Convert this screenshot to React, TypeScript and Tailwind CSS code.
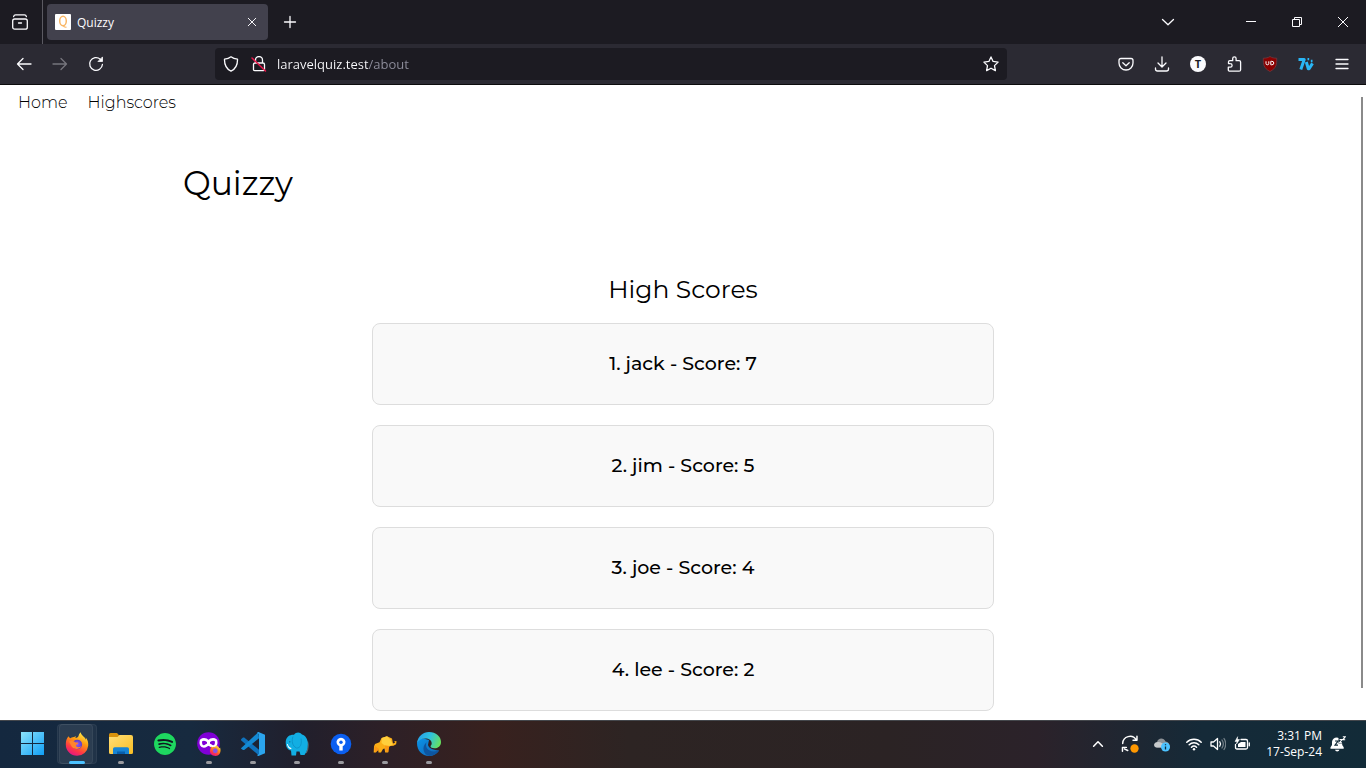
import type { ReactNode } from "react";
import { SiSpotify } from "react-icons/si";

const scores = [
  { name: "jack", score: 7 },
  { name: "jim", score: 5 },
  { name: "joe", score: 4 },
  { name: "lee", score: 2 },
];

function Line({ children, size = 16, className = "" }: { children: ReactNode; size?: number; className?: string }) {
  return (
    <svg width={size} height={size} viewBox="0 0 16 16" fill="none" stroke="currentColor" strokeWidth="1.3" strokeLinecap="round" strokeLinejoin="round" className={className} aria-hidden="true">
      {children}
    </svg>
  );
}

function ToolButton({ label, children, dim = false }: { label: string; children: ReactNode; dim?: boolean }) {
  return (
    <button type="button" aria-label={label} className={dim ? "flex size-9 items-center justify-center text-[#76757d]" : "flex size-9 items-center justify-center text-[#fbfbfe]"}>
      {children}
    </button>
  );
}

function TabStrip() {
  return (
    <div className="flex h-11 shrink-0 items-center bg-[#1c1b22] text-[#fbfbfe]">
      <button type="button" aria-label="Firefox View" className="flex h-full w-[43px] items-center justify-center border-r border-[#5b5a62] pr-0.5">
        <Line>
          <rect x="0.7" y="5" width="14.6" height="10.2" rx="2" />
          <path d="M1.6 2.6Q2 .8 3.6 .8h8.8q1.600 0 2 1.800M6.500 9h3" />
        </Line>
      </button>
      <div className="ml-1 flex h-9 w-[221px] items-center rounded bg-[#42414d] pl-2 pr-1">
        <svg width="16" height="16" viewBox="0 0 16 16" aria-hidden="true">
          <rect width="16" height="16" rx="1" fill="#fff" />
          <ellipse cx="8" cy="7" rx="3.300" ry="4.700" fill="none" stroke="#f9b766" strokeWidth="1.500" />
          <path d="M8 11.500q1 2 3.500 1.700" fill="none" stroke="#f9b766" strokeWidth="1.200" />
        </svg>
        <span className="ml-1.5 flex-1 pt-0.5 text-xs">Quizzy</span>
        <button type="button" aria-label="Close tab" className="flex size-6 items-center justify-center">
          <Line size={12}><path d="M3 3l10 10M13 3L3 13" /></Line>
        </button>
      </div>
      <button type="button" aria-label="New tab" className="ml-1 flex size-9 items-center justify-center">
        <Line><path d="M8 2.500v11M2.500 8h11" /></Line>
      </button>
      <button type="button" aria-label="List all tabs" className="ml-auto mr-[42px] flex size-9 items-center justify-center">
        <Line><path d="M2.500 5.500L8 10.800l5.500-5.300" /></Line>
      </button>
      <button type="button" aria-label="Minimize" className="flex h-full w-[46px] items-center justify-center">
        <svg width="10" height="10" fill="none" stroke="currentColor"><path d="M0 4.500h10" /></svg>
      </button>
      <button type="button" aria-label="Restore" className="flex h-full w-[46px] items-center justify-center">
        <svg width="10" height="10" fill="none" stroke="currentColor"><path d="M.5 2.500h7v7h-7zM2.500 2.500v-2h7v7h-2" /></svg>
      </button>
      <button type="button" aria-label="Close" className="flex h-full w-[46px] items-center justify-center">
        <svg width="10" height="10" fill="none" stroke="currentColor"><path d="M0 0l10 10M10 0L0 10" /></svg>
      </button>
    </div>
  );
}

function Toolbar() {
  return (
    <div className="flex h-[41px] shrink-0 items-center border-b border-[#0c0c0d] bg-[#2b2a33] px-1.5 text-[#fbfbfe]">
      <ToolButton label="Back"><Line><path d="M15 8H1.500M7 2.500L1.500 8 7 13.500" /></Line></ToolButton>
      <ToolButton label="Forward" dim><Line><path d="M1 8h13.500M9 2.500L14.500 8 9 13.500" /></Line></ToolButton>
      <ToolButton label="Reload">
        <Line>
          <path d="M12.300 3.200A6.400 6.400 0 1 0 14.400 8.500" />
          <path d="M14.500 1.300v4.200h-4.200z" fill="currentColor" strokeWidth=".8" />
        </Line>
      </ToolButton>
      <div className="mx-[101px] flex h-8 flex-1 items-center rounded bg-[#1c1b22] px-2">
        <Line>
          <path d="M8 .8C6 2.500 4 3 1.500 3.100 1.300 8.500 2.500 12.500 8 15.200c5.500-2.700 6.700-6.700 6.500-12.100C12 3 10 2.500 8 .8z" />
        </Line>
        <Line className="ml-3">
          <path d="M4.500 7V4a3.500 3.500 0 0 1 7 0v3M2.500 8.500q0-1.500 1.500-1.500h8q1.500 0 1.500 1.500v5q0 1.200-1.200 1.200H3.700q-1.200 0-1.200-1.200z" />
          <path d="M1 2l13.500 13" stroke="#e8174b" strokeWidth="1.500" />
        </Line>
        <input
          type="text"
          aria-label="Address"
          defaultValue="laravelquiz.test/about"
          className="ml-2.5 min-w-0 flex-1 bg-[linear-gradient(90deg,#fbfbfe_91px,#8f8f9d_91px)] bg-clip-text pt-0.5 text-[13px] text-transparent caret-white outline-none"
        />
        <button type="button" aria-label="Bookmark this page">
          <Line><path d="M8 .9l2.100 4.500 5 .7-3.600 3.500.9 5L8 12.200l-4.400 2.400.9-5L.9 6.100l5-.7z" /></Line>
        </button>
      </div>
      <ToolButton label="Save to Pocket">
        <Line><path d="M3 2.500h10q2 0 2 2V7a7 7 0 0 1-14 0V4.500q0-2 2-2zM4.800 6.800L8 9.800l3.200-3" /></Line>
      </ToolButton>
      <ToolButton label="Downloads"><Line><path d="M8 .8v10M4 7l4 4 4-4M1.500 12v1q0 2 2 2h9q2 0 2-2v-1" /></Line></ToolButton>
      <ToolButton label="Account">
        <span className="flex size-4 items-center justify-center rounded-full bg-[#fbfbfe] text-[11px] font-bold text-[#1c1b22]">T</span>
      </ToolButton>
      <ToolButton label="Extensions">
        <Line><path d="M2.500 7.500V6q0-1.300 1.300-1.300h2.900V2.500a1.700 1.700 0 0 1 3.400 0v2.200h3q1.500 0 1.500 1.300v7.700q0 1.500-1.500 1.500H4q-1.700 0-1.700-1.500v-2.500h2a1.800 1.800 0 0 0 0-3.600z" /></Line>
      </ToolButton>
      <ToolButton label="uBlock Origin">
        <svg width="16" height="16" viewBox="0 0 16 16" aria-hidden="true">
          <path d="M8 .5C6 1.800 4 2.200 1.300 2.200 1.200 8.500 1.500 12 8 15.500c6.500-3.500 6.800-7 6.700-13.300C12 2.200 10 1.800 8 .5z" fill="#8a0000" stroke="#6d3a40" strokeWidth=".8" />
          <path d="M4 5.300v2.200q0 1.300 1.400 1.300t1.400-1.300V5.300M8.800 5.300v3.500h1q2 0 2-1.750t-2-1.750z" fill="none" stroke="#fff" strokeWidth="1" />
        </svg>
      </ToolButton>
      <ToolButton label="7TV">
        <svg width="16" height="14" viewBox="0 0 16 14" fill="none" stroke="#29b6f6" strokeWidth="3" strokeLinejoin="round" aria-hidden="true">
          <path d="M.5 2.600h5.700L2.800 12.500M8.300 5l2 6.700h.8l3.400-5.300" />
          <path d="M9.500 2.200h1.700M12.800 4h1.700" strokeWidth="2.300" />
        </svg>
      </ToolButton>
      <ToolButton label="Open application menu"><Line><path d="M2 3.500h12M2 8h12M2 12.500h12" /></Line></ToolButton>
    </div>
  );
}

function Page() {
  return (
    <div className="relative min-h-0 flex-1 overflow-hidden bg-white font-['Montserrat',Inter,sans-serif] text-black">
      <nav className="flex gap-5 px-[18px] pt-1.5 text-base font-light">
        <a href="#home">Home</a>
        <a href="#highscores">Highscores</a>
      </nav>
      <main className="mx-auto max-w-[1000px]">
        <h1 className="pt-12 text-[33px] leading-10">Quizzy</h1>
        <section className="mx-auto max-w-[622px] pt-[68px] text-center">
          <h2 className="text-[25px] leading-9">High Scores</h2>
          <ol className="mt-4 flex flex-col gap-5">
            {scores.map((entry, index) => (
              <li key={entry.name} className="flex h-[82px] items-center justify-center rounded-lg border border-[#dddddd] bg-[#f9f9f9] text-[19px] font-medium">
                {index + 1}. {entry.name} - Score: {entry.score}
              </li>
            ))}
          </ol>
        </section>
      </main>
      <div className="absolute bottom-8 right-[3px] top-3 w-0.5 bg-[#8a8a8a]" />
    </div>
  );
}

function WindowsIcon() {
  return (
    <svg width="24" height="24" viewBox="0 0 24 24" aria-hidden="true">
      <defs>
        <linearGradient id="win" gradientUnits="userSpaceOnUse" x1="0" y1="0" x2="24" y2="24"><stop stopColor="#8ce4fc" /><stop offset="1" stopColor="#0a9bf5" /></linearGradient>
      </defs>
      <path d="M0 0h11v11H0zM12 0h11v11H12zM0 12h11v11H0zM12 12h11v11H12z" fill="url(#win)" />
    </svg>
  );
}

function FirefoxIcon() {
  return (
    <svg width="24" height="24" viewBox="0 0 24 24" aria-hidden="true" className="relative">
      <defs>
        <linearGradient id="fox" x1=".8" y1="0" x2=".3" y2="1"><stop stopColor="#fff44f" /><stop offset=".4" stopColor="#ff980e" /><stop offset=".75" stopColor="#ff3647" /><stop offset="1" stopColor="#e31587" /></linearGradient>
        <radialGradient id="globe"><stop stopColor="#9059ff" /><stop offset="1" stopColor="#5b3ec4" /></radialGradient>
      </defs>
      <path d="M3.500 4.300C4 5.500 4.800 6 5.500 6.300 7 5 8.500 5.500 9.800 4.800c.4-.3.700-.6 1.200-.7-.8 1-.5 1.500-.3 2 1.500-.3 2.600-1 3-2.500.3-1.500 1-2.600 2-3.400.2 3 4 4.200 5.200 7.500.2-.7.100-1.500-.2-2.200 2 2.400 2.800 5 2.500 8.200A11.200 11.200 0 0 1 12 23.800 11.300 11.300 0 0 1 .8 12.500C.8 9 1.600 6.300 3.500 4.300z" fill="url(#fox)" />
      <circle cx="12.300" cy="12.500" r="4.800" fill="url(#globe)" />
      <path d="M4 9.500c2.500-1.500 4.500-.5 5.800.5 1.300.8 3 .3 3.700.9-.5 1.500-2.700 1.300-2.500 2.800.6 1.800 3.700 1.800 5.500.6-2 3.500-9 3.700-10.500-1z" fill="#ff842d" />
    </svg>
  );
}

function FolderIcon() {
  return (
    <svg width="24" height="24" viewBox="0 0 24 24" aria-hidden="true">
      <defs><linearGradient id="fold" x1="0" y1="0" x2="1" y2="1"><stop stopColor="#ffdf79" /><stop offset="1" stopColor="#f9bd22" /></linearGradient></defs>
      <path d="M0 2.500Q0 1 1.500 1H8l2.300 2.500V8H0z" fill="#d8920c" />
      <path d="M0 5h8.500l2-2H22q2 0 2 2v15.500q0 1.500-1.500 1.500h-21Q0 22 0 20.500z" fill="url(#fold)" />
      <path d="M4 22v-5q0-1.700 1.700-1.700h12.600q1.700 0 1.700 1.700v5z" fill="#1684d4" />
      <path d="M8 19.500h8v2.500H8z" fill="#075eac" />
    </svg>
  );
}

function PrivateIcon() {
  return (
    <svg width="24" height="24" viewBox="0 0 24 24" aria-hidden="true">
      <circle cx="11.500" cy="11.500" r="11.300" fill="#8000d7" />
      <path d="M4 8.500c2-1.500 5-1.200 7.500 1 2.500-2.200 5.500-2.500 7.500-1 .8 3.500-.3 6-2.800 6-2.200 0-3-2-4.700-2s-2.500 2-4.700 2C4.300 14.500 3.200 12 4 8.500z" fill="none" stroke="#fff" strokeWidth="2.600" strokeLinejoin="round" />
      <path d="M11.500 8.500v5" stroke="#fff" strokeWidth="3" />
      <g transform="translate(12.500 12.500) scale(.48)">
        <path d="M3.500 4.300L6 6l4-2 1 2 4-5 6 7 1-2c3 9-1 17.500-9 17.800C4 24 .5 18 .8 12.500z" fill="url(#fox)" />
        <circle cx="12" cy="13" r="5" fill="#8655e5" />
      </g>
    </svg>
  );
}

function CodeIcon() {
  return (
    <svg width="24" height="24" viewBox="0 0 24 24" aria-hidden="true">
      <path d="M0 7.300L2 5.500h1.200L18 17.700v5.800L.2 8.500z" fill="#0f72bd" />
      <path d="M0 16.200L17.500 0 18 6.300 3.200 18H2L.2 16.700z" fill="#1389d3" />
      <path d="M17.500 0L24 2.800v18.400L17.500 24q-.8 0-1.500-1l2-1V2l-2-1q.7-1 1.500-1z" fill="#2ba5ee" />
    </svg>
  );
}

function ElephantIcon() {
  return (
    <svg width="24" height="24" viewBox="0 0 24 24" aria-hidden="true">
      <path d="M22.500 9.500q1.800 6-1.300 11.500" fill="none" stroke="#596066" strokeWidth="1.200" />
      <path d="M.8 9C1.500 4.500 5 2.500 9 2.800 11-.2 15-.3 17 2.500c4 1 6 5.500 5.800 10 0 4-1.300 7.500-3.300 10.500h-4l-1-3.500h-3L11 23.500H6.500L6 18.500C2.500 18.500.2 14 .8 9z" fill="#12aee3" />
      <path d="M8 4.500c-1.500 4-1 9.500 3.500 11.500 4 .5 5.500-4.500 4.500-9.500" fill="none" stroke="#0a8fc5" strokeWidth=".8" />
      <path d="M2.800 12q.7 3.500 3.600 4l-.2 1.300Q2.700 16.800 2 12z" fill="#fff" />
      <circle cx="4.800" cy="9.800" r=".6" fill="#0f4763" />
    </svg>
  );
}

function SourcetreeIcon() {
  return (
    <svg width="24" height="24" viewBox="0 0 24 24" aria-hidden="true">
      <circle cx="12" cy="12" r="10.300" fill="#0b5ff0" />
      <path d="M10.300 18.500v-4.200a4.500 4.500 0 1 1 3.400 0v4.200z" fill="#fff" />
      <circle cx="12" cy="10.200" r="1.700" fill="#0b5ff0" />
    </svg>
  );
}

function YellowElephantIcon() {
  return (
    <svg width="24" height="24" viewBox="0 0 24 24" aria-hidden="true">
      <path d="M2 12l4.500-1.800 2-4.200L14 4.200l5 2.300 1 5 2-.7-.7-1.800 2.300.3-.5 3-2.600 1.500-3 .2-2 1-.3 5.500h-3l-.7-4-1.500.5-2 3.500H5.500L5 16.500 3 20.500H.7L1 14.500z" fill="#fbae17" />
      <path d="M8.800 6L14 4.200l3.500 3.300 2.300 5-3.500 1.500-4.500-.5L8.500 11z" fill="#ffcf3d" />
      <path d="M1.500 13.500L6 17l-1 1.500-2 1.500-1.500-1zM11.800 13.500l4.500.5-1 6h-2.500z" fill="#fb9814" />
    </svg>
  );
}

function EdgeIcon() {
  return (
    <svg width="24" height="24" viewBox="0 0 24 24" aria-hidden="true">
      <defs>
        <linearGradient id="edgeTop" x1="0" y1=".3" x2="1" y2=".6"><stop stopColor="#259fe8" /><stop offset=".5" stopColor="#2fc2dd" /><stop offset="1" stopColor="#67e15c" /></linearGradient>
        <linearGradient id="edgeLow" x1="0" y1="0" x2="1" y2="1"><stop stopColor="#0993e8" /><stop offset="1" stopColor="#1464b4" /></linearGradient>
      </defs>
      <path d="M0 11C1 5 6 6 12 8l-1 5c1 4 6 5 11 5.500C20 22 16 24 12 24 5 24 0 18.500 0 11z" fill="url(#edgeLow)" />
      <path d="M0 11C1 4 6 0 12 0c7 0 12 4.500 12 10 0 4-3 6.300-6.500 6.300-2.500 0-4-1-4-2 0-.7 1.200-1 1.200-3 0-2.800-2.700-4.800-6.200-4.800C4 6.500 1.500 8.300 0 11z" fill="url(#edgeTop)" />
      <path d="M9.500 10.300c-2 5.500 2.500 11 11.500 8.500q1.500-.8 1-.2c-2 3.500-6 5.400-9.500 5.400-6-.8-8.500-9-3-13.700z" fill="#0d55a0" />
    </svg>
  );
}

const apps: { name: string; icon: ReactNode; state: "none" | "active" | "open" }[] = [
  { name: "Start", icon: <WindowsIcon />, state: "none" },
  { name: "Firefox", icon: <FirefoxIcon />, state: "active" },
  { name: "File Explorer", icon: <FolderIcon />, state: "open" },
  { name: "Spotify", icon: <span className="flex rounded-full bg-[#101820]"><SiSpotify size={22} color="#1ed760" /></span>, state: "none" },
  { name: "Private browsing", icon: <PrivateIcon />, state: "open" },
  { name: "Visual Studio Code", icon: <CodeIcon />, state: "open" },
  { name: "TablePlus", icon: <ElephantIcon />, state: "open" },
  { name: "Sourcetree", icon: <SourcetreeIcon />, state: "open" },
  { name: "Database", icon: <YellowElephantIcon />, state: "open" },
  { name: "Edge", icon: <EdgeIcon />, state: "open" },
];

function Taskbar() {
  return (
    <footer className="flex h-12 shrink-0 items-center bg-[linear-gradient(90deg,#14283f_0%,#172a3f_14%,#211f2c_22%,#2d2027_28%,#38211e_36%,#2d2423_46%,#2b2324_65%,#2b222a_76%,#152a38_88%,#122b38_100%)] pl-[11px] pr-5 text-white shadow-[inset_0_1px_0_#44474c]">
      <div className="flex">
        {apps.map((app) => (
          <button key={app.name} type="button" aria-label={app.name} className="relative flex h-10 w-11 items-center justify-center">
            {app.state === "active" && (
              <>
                <span className="absolute inset-y-0 left-1 right-0.5 rounded border border-white/5 bg-white/5" />
                <span className="absolute inset-y-0 left-0.5 right-1.5 rounded border border-white/5 bg-white/5" />
              </>
            )}
            {app.icon}
            {app.state === "active" && <span className="absolute bottom-0 h-[3px] w-4 rounded-full bg-[#4cc2ff]" />}
            {app.state === "open" && <span className="absolute bottom-0 h-[3px] w-1.5 rounded-full bg-[#9a9a9f]" />}
          </button>
        ))}
      </div>
      <div className="ml-auto flex items-center">
        <button type="button" aria-label="Show hidden icons" className="flex w-8 justify-center">
          <Line size={14}><path d="M3 10.500l5-5 5 5" strokeWidth="1.800" /></Line>
        </button>
        <button type="button" aria-label="Updates" className="flex w-8 justify-center">
          <Line size={18}>
            <path d="M1.500 7.500A6.500 6.500 0 0 1 13.500 4.300M14.200 1.200v3.500h-3.500M6 13.800L3 12.300M1.300 14.500v-3.500h3.500" />
            <circle cx="12" cy="12" r="3.700" fill="#ff9800" stroke="none" />
          </Line>
        </button>
        <button type="button" aria-label="OneDrive" className="flex w-8 justify-center">
          <svg width="16" height="16" viewBox="0 0 16 16" aria-hidden="true">
            <path d="M3 11.500C-1 11-.5 6.500 3 6.200 4 1.500 10 1.500 11.500 5.500c3 .3 4.500 2.500 4 6z" fill="#8d9297" />
            <path d="M3 6.200C6 5.500 8 7 12 9.500l-2 2H3C-1 11-.5 6.500 3 6.200z" fill="#c7cacc" />
            <circle cx="11.500" cy="11" r="4.500" fill="#4cc2ff" />
            <path d="M11.500 10.500v3M11.500 8.200v1" stroke="#102b39" strokeWidth="1.300" />
          </svg>
        </button>
        <button type="button" aria-label="Network, volume and battery" className="ml-2 flex items-center gap-2">
          <Line>
            <path d="M.8 6.200a10 10 0 0 1 14.400 0M3.200 8.800a6.800 6.800 0 0 1 9.600 0M5.500 11.200a3.600 3.600 0 0 1 5 0" strokeWidth="1.500" />
            <circle cx="8" cy="13.300" r="1.200" fill="currentColor" stroke="none" />
          </Line>
          <Line>
            <path d="M1 6h2.500L7.500 2.500v11L3.500 10H1zM9.800 5.800q1.500 2.200 0 4.400" />
            <path d="M12 4q2.700 4 0 8M14 2.500q3.500 5.500 0 11" className="opacity-40" />
          </Line>
          <Line>
            <path d="M7 3.500h5q1.500 0 1.500 1.500v6.500q0 1.500-1.500 1.500H3Q1.500 13 1.500 11.500V8.500M15.300 6.800v3" />
            <path d="M4 11V8l3-2h4.500v5z" fill="currentColor" stroke="none" />
            <path d="M3.500 1L1 5.500h2L2.500 8l3-4.500h-2z" fill="currentColor" strokeWidth=".5" />
          </Line>
        </button>
        <button type="button" className="ml-4 text-right text-xs leading-4">
          <span className="block">3:31 PM</span>
          <span className="block">17-Sep-24</span>
        </button>
        <button type="button" aria-label="Notifications" className="ml-2">
          <svg width="16" height="16" viewBox="0 0 16 16" fill="currentColor" aria-hidden="true">
            <path d="M.5 12.700v-1.500L2 9V6Q2.500 1.500 7 1.500L8.500 2v5.500h3.700V9l1.500 2.200v1.500zM5 13.700h4.500Q9 15.500 7.200 15.500T5 13.700z" />
            <path d="M5 5h3l-3 4.200h3" fill="none" stroke="#122b38" strokeWidth="1.200" />
            <path d="M9.500 3.500H12L9.500 6.800H12M12.800 .8h2.400l-2.400 3h2.400" fill="none" stroke="currentColor" strokeWidth="1.100" />
          </svg>
        </button>
      </div>
    </footer>
  );
}

export default function App() {
  return (
    <div className="flex h-screen flex-col overflow-hidden font-['Segoe_UI','Open_Sans',sans-serif]">
      <TabStrip />
      <Toolbar />
      <Page />
      <Taskbar />
    </div>
  );
}
